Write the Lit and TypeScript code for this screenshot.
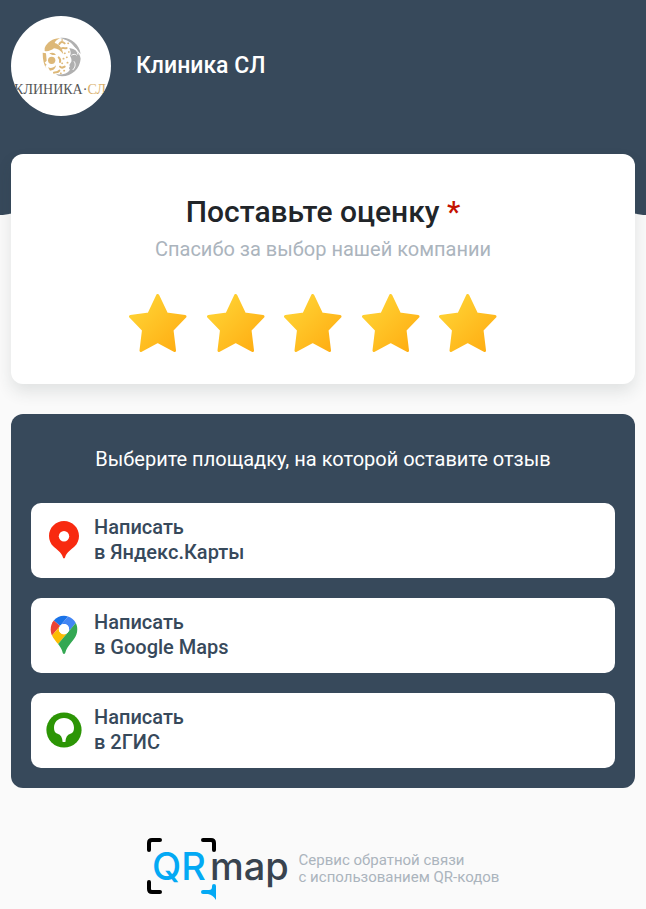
import { LitElement, html, css, svg } from "lit";
import { customElement, property, state } from "lit/decorators.js";

const yandexIcon = svg`
  <svg viewBox="0 0 36 40" width="36" height="40" aria-hidden="true">
    <path fill="#f82a10" d="M18 1C9.700 1 3 7.700 3 16c0 4.200 1.700 7.900 4.500 10.600 2.700 2.700 7.900 5.800 9.300 10.500.2.700.6 1.400 1.200 1.400s1-.7 1.200-1.400c1.400-4.700 6.600-7.800 9.300-10.500C31.300 23.900 33 20.200 33 16 33 7.700 26.300 1 18 1z"/>
    <circle cx="18" cy="16.200" r="5.200" fill="#fff"/>
  </svg>`;

const googleIcon = svg`
  <svg viewBox="-13 -3 118.400 139" width="36" height="40" aria-hidden="true">
    <path fill="#1a73e8" d="M60.200 2.200C55.800.8 51 0 46.100 0 32 0 19.300 6.400 10.800 16.500l21.800 18.300z"/>
    <path fill="#ea4335" d="M10.800 16.500C4.100 24.500 0 34.900 0 46.100c0 8.700 1.700 15.700 4.600 22l28-33.300z"/>
    <path fill="#4285f4" d="M46.200 28.500c9.800 0 17.700 7.900 17.700 17.700 0 4.300-1.600 8.300-4.200 11.400l27.500-32.700c-5.600-10.800-15.300-19-27-22.700L32.600 34.800c3.300-3.800 8.100-6.300 13.600-6.300"/>
    <path fill="#fbbc04" d="M46.200 63.800c-9.800 0-17.700-7.900-17.700-17.700 0-4.300 1.500-8.300 4.100-11.300l-28 33.300c4.800 10.600 12.800 19.200 21 29.900l34.100-40.500c-3.300 3.900-8.100 6.300-13.500 6.300"/>
    <path fill="#34a853" d="M59.100 109.200c15.400-24.100 33.300-35 33.300-63 0-7.700-1.900-14.900-5.200-21.300L25.600 98c2.600 3.400 5.300 7.300 7.900 11.300 9.400 14.500 6.800 23.100 12.800 23.100s3.400-8.700 12.800-23.200"/>
    <circle cx="46.200" cy="46.200" r="17.700" fill="#fff"/>
  </svg>`;

const gisIcon = svg`
  <svg viewBox="0 0 36 40" width="36" height="40" aria-hidden="true">
    <circle cx="18" cy="20" r="17.600" fill="#2c9505"/>
    <path fill="#fff" d="M18 8C11.800 8 8 12.400 8 17.700c0 3.300 1.100 5.300 3.600 6.100 3.200 1 4.800 3.800 5 8.300h2.800c.2-4.500 1.800-7.300 5-8.300 2.500-.8 3.600-2.800 3.600-6.100C28 12.400 24.200 8 18 8z"/>
  </svg>`;

const platforms = [
  { name: "Яндекс.Карты", icon: yandexIcon },
  { name: "Google Maps", icon: googleIcon },
  { name: "2ГИС", icon: gisIcon },
];

@customElement("clinic-logo")
class ClinicLogo extends LitElement {
  static styles = css`
    :host { display: block; flex: none; width: 100px; height: 100px; border-radius: 50%; overflow: hidden; background: #fff; }
    svg { display: block; }
    .word { font: 14px "Liberation Serif", serif; fill: #555; }
    .gold { fill: #d9b06c; }
  `;
  render() {
    return html`
      <svg viewBox="0 0 100 100" width="100" height="100" role="img" aria-label="Клиника СЛ">
        <svg x="25" y="16" width="50" height="50" viewBox="0 0 150 150">
          <g fill="#b0b0b0">
            <path d="M72 18c30-4 58 18 62 48-8-6-10-14-18-20-8-14-22-22-44-28z" />
            <path d="M100 48c16 2 32 14 34 32-2 30-26 52-56 53-8 0-14-2-18-6 20 2 34-2 42-14-4-2-4-6 0-10-4-4 0-8 4-14 2-8-2-14-4-18 4-6 2-14-2-23z" />
          </g>
          <g fill="#ddb878">
            <path d="M26 48c8-18 26-30 46-29-8 4-14 8-16 14 14 4 24 16 26 34-8-12-18-18-28-18-8 6-18 10-28 8z" />
            <path d="M20 62l10 2 2 22-6 6 6 6-4 4 4 8c-8-10-12-26-12-48zM40 64c8-4 16-2 20 4-6 2-14 2-20-4z" />
            <path d="M36 106c8 4 16 2 24-6-2 12-10 16-18 16z" />
            <circle cx="47" cy="85" r="11" />
          </g>
          <g fill="none" stroke="#ddb878" stroke-width="6" stroke-linecap="round">
            <path d="M70 36c4-8 10-8 16-2M76 50c6-6 10 2 16-2M68 76c4 4 6 8 4 14M54 122c6-4 10 2 16-6M72 104c4 4 8 4 14 0" />
            <path stroke-width="5" d="M78 24h1M96 34h1M86 64h1M82 80h1M92 76h1M78 94h1M94 92h1M84 116h1M74 124h1M98 60h1" />
          </g>
          <path fill="none" stroke="#fff" stroke-width="3" d="M106 70c6-4 12-4 16 0M114 88c6 8 4 18-4 26M112 44c8 6 12 14 14 24" />
        </svg>
        <text class="word" x="49" y="78" text-anchor="middle">КЛИНИКА·<tspan class="gold">СЛ</tspan></text>
      </svg>`;
  }
}

@customElement("star-rating")
class StarRating extends LitElement {
  @state() private value = 5;

  static styles = css`
    :host { display: block; width: 100%; max-width: 388px; }
    .stars { display: grid; grid-template-columns: repeat(5, 1fr); margin: 0; padding: 0; border: 0; }
    .star { display: grid; width: 58px; height: 58px; cursor: pointer; }
    .star > * { grid-area: 1 / 1; }
    .input { appearance: none; width: 58px; height: 58px; margin: 0; opacity: 0; cursor: pointer; }
    .off { opacity: 0.3; }
  `;
  render() {
    return html`
      <fieldset class="stars" aria-label="Оценка">
        ${[1, 2, 3, 4, 5].map(
          (n) => html`
            <label class="star">
              <input class="input" type="radio" name="rating" aria-label=${n} .checked=${this.value === n} @change=${() => (this.value = n)} />
              <svg class=${n > this.value ? "off" : "on"} viewBox="0 0 58 58" width="58" height="58" aria-hidden="true">
                <defs>
                  <linearGradient id="fill" x1="0" y1="0" x2="58" y2="58" gradientUnits="userSpaceOnUse">
                    <stop offset="0.15" stop-color="#ffd233" />
                    <stop offset="0.85" stop-color="#ffb015" />
                  </linearGradient>
                </defs>
                <path fill="url(#fill)" stroke="url(#fill)" stroke-width="3" stroke-linejoin="round"
                  d="M28.700 1.500L37.500 20L56 22.500L43 36L45.500 56.500L28.700 47.500L12 56.500L14.500 36L1.500 22.500L20 20Z" />
              </svg>
            </label>`
        )}
      </fieldset>`;
  }
}

@customElement("platform-link")
class PlatformLink extends LitElement {
  @property() name = "";
  @property({ attribute: false }) icon: unknown;

  static styles = css`
    :host { display: block; }
    .link { display: flex; align-items: center; gap: 12px; padding: 12px 15px 13px; border-radius: 10px; background: #fff; color: #37495b; font-size: 20px; line-height: 25px; font-weight: 500; text-decoration: none; }
    svg { display: block; flex: none; }
  `;
  render() {
    return html`<a class="link" href="#">${this.icon}<span>Написать<br />в ${this.name}</span></a>`;
  }
}

@customElement("service-footer")
class ServiceFooter extends LitElement {
  static styles = css`
    :host { display: flex; justify-content: center; align-items: center; gap: 10px; padding: 50px 11px 9px; color: #abb4bd; font-size: 15px; line-height: 17px; }
    .logo { display: block; flex: none; }
    .note { margin: 0; }
    .qr { font: 500 38px Inter, sans-serif; fill: #03a9f4; }
    .map { font: 500 38px Inter, sans-serif; fill: #38434f; }
  `;
  render() {
    return html`
      <svg class="logo" viewBox="0 0 142 62" width="142" height="62" role="img" aria-label="QRmap">
        <g fill="none" stroke="#000" stroke-width="4" stroke-linecap="round">
          <path d="M13 2H5Q2 2 2 5V12" />
          <path d="M56 2H64Q67 2 67 5V12" />
          <path d="M2 44V51Q2 54 5 54H13" />
        </g>
        <path fill="#03a9f4" d="M69 48v14q-3-5-8-6h-5q-2 0-2-2t2-2h6q3 0 3-3v-1q0-2 2-2t2 2z" />
        <text class="qr" x="5" y="42">QR</text>
        <text class="map" x="63" y="42">map</text>
      </svg>
      <p class="note">Сервис обратной связи<br />с использованием QR-кодов</p>`;
  }
}

@customElement("app-root")
class AppRoot extends LitElement {
  static styles = css`
    :host {
      display: block;
      box-sizing: border-box;
      min-height: 100vh;
      font-family: Roboto, "Liberation Sans", sans-serif;
      background: radial-gradient(ellipse 70% 80px at 50% 271px, #fafafa 99%, #37495b 100%) top / 100% 215px no-repeat #fafafa;
    }
    .header { display: flex; align-items: center; gap: 25px; padding: 16px 11px 38px; color: #fff; }
    .name { margin: 0; font-size: 23px; line-height: 26px; font-weight: 500; }
    .main { display: grid; gap: 30px; padding: 0 11px; }
    .rate { display: flex; flex-direction: column; align-items: center; padding: 38px 20px 32px; border-radius: 12px; background: #fff; box-shadow: 0 8px 16px rgba(40, 60, 55, 0.12); text-align: center; }
    .title { margin: 0; color: #212529; font-size: 30px; line-height: 40px; font-weight: 500; }
    .required { color: #c41200; }
    .thanks { margin: 4px 0 32px; color: #abb4bd; font-size: 20px; line-height: 26px; }
    .choose { display: grid; gap: 20px; padding: 32px 20px 20px; border-radius: 12px; background: #37495b; }
    .prompt { margin: 0 0 11px; color: #fff; font-size: 20px; line-height: 26px; font-weight: 400; text-align: center; }
  `;
  render() {
    return html`
      <header class="header">
        <clinic-logo></clinic-logo>
        <h1 class="name">Клиника СЛ</h1>
      </header>
      <main class="main">
        <section class="rate">
          <h2 class="title">Поставьте оценку <span class="required">*</span></h2>
          <p class="thanks">Спасибо за выбор нашей компании</p>
          <star-rating></star-rating>
        </section>
        <section class="choose">
          <h2 class="prompt">Выберите площадку, на которой оставите отзыв</h2>
          ${platforms.map((p) => html`<platform-link .name=${p.name} .icon=${p.icon}></platform-link>`)}
        </section>
      </main>
      <service-footer></service-footer>`;
  }
}
